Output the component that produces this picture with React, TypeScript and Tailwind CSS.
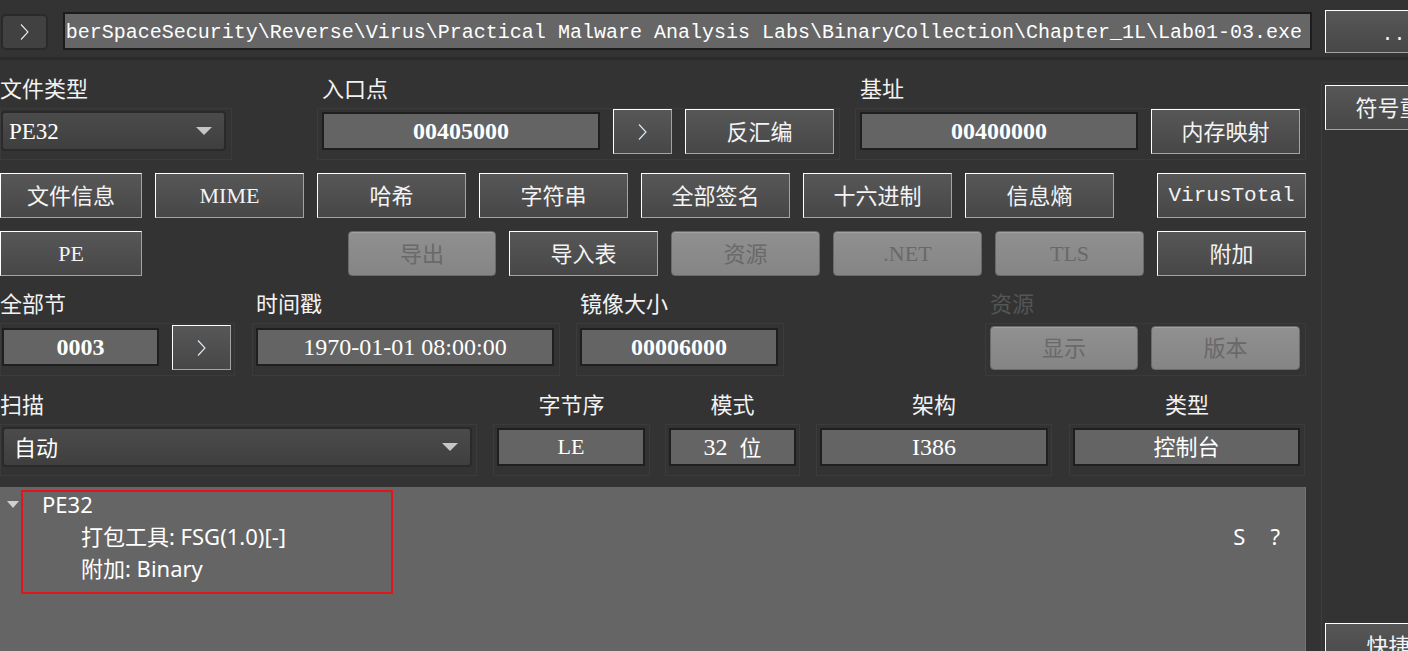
import React from 'react';

const cjk = "font-['Noto_Sans_CJK_SC',sans-serif]";
const cjkBtn = `${cjk} pb-[4px]`;
const serif = "font-['Liberation_Serif','Noto_Sans_CJK_SC',serif]";
const mono = "font-['Liberation_Mono','Noto_Sans_CJK_SC',monospace]";
const sans = "font-['Noto_Sans','Noto_Sans_CJK_SC',sans-serif]";

const btnOn =
  'flex shrink-0 items-center justify-center whitespace-nowrap border border-t-white border-l-white border-r-[#a3a3a3] border-b-[#a3a3a3] bg-linear-to-b from-[#575757] to-[#474747] text-[#f4f4f4] leading-none';
const btnOff =
  'flex shrink-0 items-center justify-center whitespace-nowrap rounded-[4px] border border-[#6a6a6a] bg-linear-to-b from-[#909090] to-[#858585] text-[#696969] leading-none shadow-[inset_0_1px_0_#a2a2a2]';
const field =
  'flex shrink-0 items-center justify-center whitespace-nowrap h-[38px] border-2 border-[#1f1f1f] bg-[#646464] text-white leading-none';
const frame = 'flex items-start border border-[#3b3b3b]';
const label = `h-[30px] whitespace-nowrap text-[22px] leading-[18px] text-[#f2f2f2] ${cjk}`;

const Chevron = () => (
  <svg width="11" height="18" viewBox="0 0 11 18">
    <path d="M2 1.5 L9 9 L2 16.5" fill="none" stroke="#e2ecf6" strokeWidth="1.1" />
  </svg>
);

const Arrow = () => (
  <svg width="16" height="8" viewBox="0 0 16 8">
    <path d="M0 0 H16 L8 8 Z" fill="#c6c6c6" />
  </svg>
);

const Combo = ({ children, w }: { children: React.ReactNode; w: string }) => (
  <div
    className={`${w} flex h-[40px] shrink-0 items-center justify-between rounded-[4px] border-2 border-[#2a2a2a] bg-linear-to-b from-[#4b4b4b] to-[#3f3f3f] pl-[6px] pr-[12px] text-white leading-none`}
  >
    {children}
    <Arrow />
  </div>
);

const App: React.FC = () => {
  const row2 = ['字符串', '全部签名', '十六进制', '信息熵'];

  return (
    <div className="relative flex h-[651px] w-[1408px] flex-col overflow-hidden bg-[#333333] text-white">
      {/* path bar */}
      <div className="flex h-[57px] shrink-0 items-start">
        <div className="ml-[1px] mt-[14px] flex h-[36px] w-[47px] shrink-0 items-center justify-center rounded-[5px] border-2 border-[#2a2a2a] bg-[#414141]">
          <Chevron />
        </div>
        <div className="ml-[15px] mt-[12px] flex h-[38px] w-[1249px] shrink-0 items-center justify-end overflow-hidden border-2 border-[#1c1c1c] bg-[#666666] pr-[8px] pt-[3px]">
          <span className={`whitespace-nowrap text-[20px] leading-none text-white ${mono}`}>
            berSpaceSecurity\Reverse\Virus\Practical Malware Analysis Labs\BinaryCollection\Chapter_1L\Lab01-03.exe
          </span>
        </div>
        <div className={`${btnOn} ml-[13px] mt-[10px] h-[43px] w-[149px] pt-[6px] text-[20px] ${mono}`}>...</div>
      </div>
      <div className="h-[3px] shrink-0 bg-[#2b2b2b]" />

      <div className="flex flex-1">
        {/* main column */}
        <div className="flex w-[1306px] shrink-0 flex-col pt-[18px]">
          {/* row 1 */}
          <div className="flex">
            <div className="flex w-[232px] flex-col">
              <div className={label}>文件类型</div>
              <div className={`${frame} h-[52px] pt-[2px]`}>
                <Combo w="w-[225px]">
                  <span className={`text-[23px] ${serif}`}>PE32</span>
                </Combo>
              </div>
            </div>
            <div className="ml-[85px] flex w-[523px] flex-col">
              <div className={`${label} pl-[5px]`}>入口点</div>
              <div className={`${frame} h-[52px] gap-[13px] pl-[4px]`}>
                <div className={`${field} mt-[3px] w-[278px] text-[24px] font-bold ${serif}`}>00405000</div>
                <div className={`${btnOn} h-[45px] w-[59px]`}>
                  <Chevron />
                </div>
                <div className={`${btnOn} h-[45px] w-[149px] text-[22px] ${cjkBtn}`}>反汇编</div>
              </div>
            </div>
            <div className="ml-[15px] flex w-[451px] flex-col">
              <div className={`${label} pl-[5px]`}>基址</div>
              <div className={`${frame} h-[52px] gap-[13px] pl-[4px]`}>
                <div className={`${field} mt-[3px] w-[278px] text-[24px] font-bold ${serif}`}>00400000</div>
                <div className={`${btnOn} h-[45px] w-[149px] text-[22px] ${cjkBtn}`}>内存映射</div>
              </div>
            </div>
          </div>

          {/* row 2 */}
          <div className="mt-[13px] flex gap-[13px]">
            <div className={`${btnOn} h-[45px] w-[142px] text-[22px] ${cjkBtn}`}>文件信息</div>
            <div className={`${btnOn} h-[45px] w-[149px] text-[22px] ${serif}`}>MIME</div>
            <div className={`${btnOn} h-[45px] w-[149px] text-[22px] ${cjkBtn}`}>哈希</div>
            {row2.map((t) => (
              <div key={t} className={`${btnOn} h-[45px] w-[149px] text-[22px] ${cjkBtn}`}>
                {t}
              </div>
            ))}
            <div className={`${btnOn} ml-[30px] h-[45px] w-[149px] text-[21px] ${mono}`}>VirusTotal</div>
          </div>

          {/* row 3 */}
          <div className="mt-[13px] flex gap-[13px]">
            <div className={`${btnOn} h-[45px] w-[142px] text-[22px] ${serif}`}>PE</div>
            <div className={`${btnOff} ml-[193px] h-[45px] w-[148px] text-[22px] ${cjkBtn}`}>导出</div>
            <div className={`${btnOn} h-[45px] w-[149px] text-[22px] ${cjkBtn}`}>导入表</div>
            <div className={`${btnOff} h-[45px] w-[149px] text-[22px] ${cjkBtn}`}>资源</div>
            <div className={`${btnOff} h-[45px] w-[149px] text-[22px] ${serif}`}>.NET</div>
            <div className={`${btnOff} h-[45px] w-[149px] text-[22px] ${serif}`}>TLS</div>
            <div className={`${btnOn} h-[45px] w-[149px] text-[22px] ${cjkBtn}`}>附加</div>
          </div>

          {/* row 4 */}
          <div className="mt-[17px] flex">
            <div className="flex w-[235px] flex-col">
              <div className={label}>全部节</div>
              <div className={`${frame} h-[53px] pl-[1px] pt-[1px]`}>
                <div className={`${field} mt-[3px] w-[157px] text-[24px] font-bold ${serif}`}>0003</div>
                <div className={`${btnOn} ml-[13px] h-[45px] w-[59px]`}>
                  <Chevron />
                </div>
              </div>
            </div>
            <div className="ml-[17px] flex w-[308px] flex-col">
              <div className={`${label} pl-[4px]`}>时间戳</div>
              <div className={`${frame} h-[53px] pl-[3px] pt-[4px]`}>
                <div className={`${field} w-[298px] text-[24px] ${serif}`}>1970-01-01 08:00:00</div>
              </div>
            </div>
            <div className="ml-[16px] flex w-[208px] flex-col">
              <div className={`${label} pl-[4px]`}>镜像大小</div>
              <div className={`${frame} h-[53px] pl-[3px] pt-[4px]`}>
                <div className={`${field} w-[198px] text-[24px] font-bold ${serif}`}>00006000</div>
              </div>
            </div>
            <div className="ml-[201px] flex w-[321px] flex-col">
              <div className={`${label} pl-[5px] !text-[#555555]`}>资源</div>
              <div className={`${frame} h-[53px] gap-[13px] pl-[4px] pt-[2px]`}>
                <div className={`${btnOff} h-[44px] w-[148px] text-[22px] ${cjkBtn}`}>显示</div>
                <div className={`${btnOff} h-[44px] w-[149px] text-[22px] ${cjkBtn}`}>版本</div>
              </div>
            </div>
          </div>

          {/* row 5 */}
          <div className="mt-[18px] flex">
            <div className="flex w-[477px] flex-col">
              <div className={label}>扫描</div>
              <div className={`${frame} h-[52px] pl-[1px] pt-[2px]`}>
                <Combo w="w-[470px]">
                  <span className={`pb-[3px] pl-[4px] text-[22px] ${cjk}`}>自动</span>
                </Combo>
              </div>
            </div>
            <div className="ml-[16px] flex w-[157px] flex-col">
              <div className={`${label} text-center`}>字节序</div>
              <div className={`${frame} h-[52px] pl-[3px] pt-[3px]`}>
                <div className={`${field} w-[148px] text-[22px] ${serif}`}>LE</div>
              </div>
            </div>
            <div className="ml-[15px] flex w-[135px] flex-col">
              <div className={`${label} text-center`}>模式</div>
              <div className={`${frame} h-[52px] pl-[3px] pt-[3px]`}>
                <div className={`${field} w-[127px] text-[24px] ${serif}`}>
                  32<span className={`mb-[3px] ml-[12px] text-[22px] ${cjk}`}>位</span>
                </div>
              </div>
            </div>
            <div className="ml-[16px] flex w-[236px] flex-col">
              <div className={`${label} text-center`}>架构</div>
              <div className={`${frame} h-[52px] pl-[3px] pt-[3px]`}>
                <div className={`${field} w-[228px] text-[24px] ${serif}`}>I386</div>
              </div>
            </div>
            <div className="ml-[17px] flex w-[236px] flex-col">
              <div className={`${label} text-center`}>类型</div>
              <div className={`${frame} h-[52px] pl-[3px] pt-[3px]`}>
                <div className={`${field} w-[227px] text-[22px] ${cjkBtn}`}>控制台</div>
              </div>
            </div>
          </div>

          {/* result pane */}
          <div className={`relative mt-[11px] flex flex-1 flex-col border-r border-[#747474] bg-[#656565] pt-[1px] text-[22px] leading-none text-white ${sans}`}>
            <div className="flex h-[32px] items-center">
              <svg className="ml-[7px]" width="12" height="7" viewBox="0 0 12 7">
                <path d="M0 0 H12 L6 7 Z" fill="#d0d0d0" />
              </svg>
              <span className="ml-[23px]">PE32</span>
            </div>
            <div className="flex h-[32px] items-center pl-[81px] pr-[25px]">
              <span>打包工具: FSG(1.0)[-]</span>
              <span className="ml-auto">S</span>
              <span className="ml-[25px]">?</span>
            </div>
            <div className="flex h-[32px] items-center pl-[81px]">
              <span>附加: Binary</span>
            </div>
            <div className="absolute left-[21px] top-[3px] h-[104px] w-[372px] border-2 border-[#e3141c]" />
          </div>
        </div>

        {/* side panel */}
        <div className="ml-[15px] mt-[22px] flex h-[590px] flex-1 flex-col border-l border-t border-[#3d3d3d] pl-[3px] pt-[2px]">
          <div className={`${btnOn} h-[45px] w-[149px] text-[22px] ${cjkBtn}`}>符号重整</div>
          <div className={`${btnOn} mb-[4px] mt-auto h-[45px] w-[149px] text-[22px] ${cjkBtn}`}>快捷键</div>
        </div>
      </div>
    </div>
  );
};

export default App;
